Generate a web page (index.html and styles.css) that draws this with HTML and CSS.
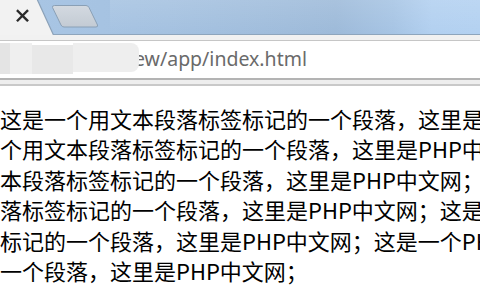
FILE: index.html
```html
<!DOCTYPE html>
<html lang="zh-CN">
<head>
<meta charset="utf-8">
<title>index.html</title>
<link rel="stylesheet" href="styles.css">
</head>
<body>
<div class="chrome">
  <div class="tabstrip">
    <svg class="tabs" width="110" height="35" viewBox="0 0 110 35">
      <defs>
        <linearGradient id="nt" x1="0" y1="0" x2="0" y2="1">
          <stop offset="0" stop-color="#d3d9e0"/>
          <stop offset="1" stop-color="#c3cbd4"/>
        </linearGradient>
      </defs>
      <path d="M-2 -1 H37 L53.5 35 H-2 Z" fill="#f2f2f2"/>
      <path d="M37 -1 L53.5 35" stroke="#8ba1b8" stroke-width="1.2" fill="none"/>
      <path d="M54.5 5.5 H86 Q88 5.5 89 7.5 L97.5 25 Q98 27 96 27 H64 Q62 27 61 25 L52.5 7.5 Q52 5.5 54.5 5.5 Z" fill="url(#nt)" stroke="#8aa0b6" stroke-width="1"/>
      <path d="M17.8 11 L27.2 20.4 M27.2 11 L17.8 20.4" stroke="#2b2b2b" stroke-width="2.4" stroke-linecap="square"/>
    </svg>
    <div class="glow"></div>
  </div>
  <div class="toolbar">
    <div class="omnibox">
      <div class="blur">
        <span class="b b1"></span><span class="b b2"></span><span class="b b3"></span><span class="b b4"></span>
      </div>
      <span class="url">ew/app/index.html</span>
    </div>
  </div>
  <div class="infobar"></div>
</div>
<main class="page">
  <p class="line">这是一个用文本段落标签标记的一个段落，这里是PHP中文网；</p>
  <p class="line">个用文本段落标签标记的一个段落，这里是PHP中文网；</p>
  <p class="line">本段落标签标记的一个段落，这里是PHP中文网；</p>
  <p class="line">落标签标记的一个段落，这里是PHP中文网；这是一个</p>
  <p class="line">标记的一个段落，这里是PHP中文网；这是一个PHP</p>
  <p class="line">一个段落，这里是PHP中文网；</p>
</main>
</body>
</html>
```

FILE: styles.css
```css
html, body {
  margin: 0;
  padding: 0;
  width: 480px;
  height: 300px;
  overflow: hidden;
  background: #ffffff;
}

.chrome {
  display: flex;
  flex-direction: column;
}

.tabstrip {
  height: 34px;
  display: flex;
  align-items: flex-start;
  background: linear-gradient(90deg, #a9c6e5 0%, #a4c1e0 35%, #9dbad9 70%, #a6c4e4 82%, #b2d0f0 90%, #b3d1f1 100%);
  border-bottom: 1px solid #8ea5bc;
}

.tabs {
  display: block;
  flex: none;
}

.glow {
  flex: 1;
  height: 34px;
  background: linear-gradient(180deg, rgba(255,255,255,0.12), rgba(255,255,255,0));
}

.toolbar {
  background: #f1f1f1;
  padding-top: 5px;
}

.omnibox {
  height: 37px;
  background: #ffffff;
  border-top: 1px solid #c6c6c6;
  border-bottom: 2px solid #b3b3b3;
  display: flex;
  align-items: center;
  overflow: hidden;
}

.blur {
  flex: none;
  width: 139px;
  height: 37px;
  display: flex;
  align-items: stretch;
  position: relative;
  z-index: 1;
}

.b {
  display: block;
  margin: 2px 0 4px;
}
.b1 { width: 10px; background: #e4e4e4; }
.b2 { width: 22px; background: #efefef; }
.b3 { width: 41px; background: #e8e8e8; margin-top: 4px; }
.b4 { width: 66px; background: #eeeeee; border-radius: 0 8px 8px 0; margin-bottom: 6px; }

.url {
  font-family: "Noto Sans", "Open Sans", sans-serif;
  font-size: 19.5px;
  color: #6a6a6a;
  white-space: nowrap;
  margin-left: -5px;
  padding-bottom: 2px;
}

.infobar {
  height: 4px;
  background: #eeeeee;
  border-bottom: 2px solid #c9c9c9;
}

.page {
  padding-top: 17px;
}

.line {
  margin: 0;
  font-family: "Noto Sans CJK SC", "Noto Sans", sans-serif;
  font-size: 22px;
  line-height: 30.4px;
  color: #000000;
  white-space: nowrap;
  overflow: hidden;
}
```
